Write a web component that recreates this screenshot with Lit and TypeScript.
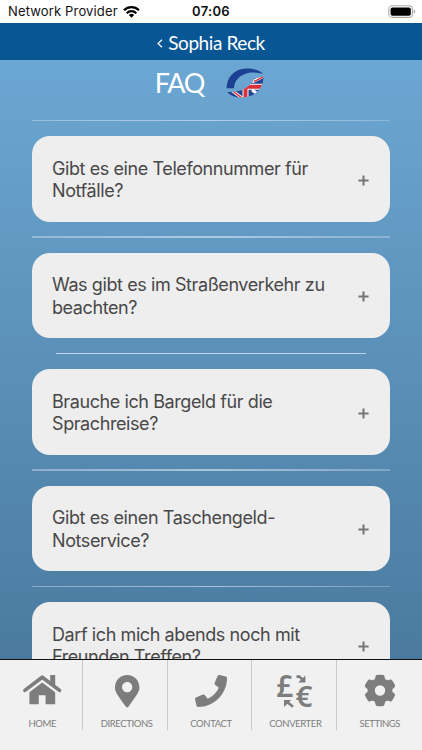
import { LitElement, html, css, svg } from "lit";
import { customElement, property } from "lit/decorators.js";

const marker = "M172.268 501.67C26.97 291.031 0 269.413 0 192 0 85.961 85.961 0 192 0s192 85.961 192 192c0 77.413-26.97 99.031-172.268 309.67-9.535 13.774-29.93 13.773-39.464 0zM192 272c44.183 0 80-35.817 80-80s-35.817-80-80-80-80 35.817-80 80 35.817 80 80 80z";
const phone = "M493.4 24.6l-104-24c-11.3-2.6-22.9 3.3-27.5 13.9l-48 112c-4.2 9.8-1.4 21.3 6.9 28l60.6 49.6c-36 76.7-98.9 140.5-177.2 177.2l-49.6-60.6c-6.8-8.3-18.2-11.1-28-6.9l-112 48C3.9 366.5-2 378.1.6 389.4l24 104C27.1 504.2 36.7 512 48 512c256.1 0 464-207.5 464-464 0-11.2-7.7-20.9-18.6-23.4z";
const teeth = [0, 60, 120, 180, 240, 300];

// Every tab icon is drawn in a 40 x 34 box.
const icons: Record<string, unknown> = {
  home: svg`<path d="M2.9 16.4 20.2 3.2 37.5 16.4" fill="none" stroke="currentColor" stroke-width="3.7" stroke-linecap="round" stroke-linejoin="round"/>
    <path d="M28.2 1h5v11l-5-4zM20.2 8.4 33.2 18.2v12.1H23.6v-9h-6.8v9H7.4V18.2z"/>`,
  directions: svg`<path transform="translate(8 1) scale(.0635)" d=${marker}/>`,
  contact: svg`<path transform="translate(4 1) scale(.0625)" d=${phone}/>`,
  converter: svg`<text class="cur" x="1.2" y="22.6" font-size="30" textLength="17" lengthAdjust="spacingAndGlyphs">£</text>
    <text class="cur" x="20.5" y="33" font-size="29" textLength="17" lengthAdjust="spacingAndGlyphs">€</text>
    <path d="M30.4 1.6v7h-7.2zM9 33v-7h7.200z"/>
    <path d="M21.500 2.600h2.700l4 3.300M18 32.800l-5.500-4.600" fill="none" stroke="currentColor" stroke-width="2.600"/>`,
  settings: svg`<circle cx="20" cy="16.5" r="8.8" fill="none" stroke="currentColor" stroke-width="7.2"/>
    ${teeth.map((a) => svg`<path transform="translate(20 16.5) rotate(${a})" d="M-5.3-10.5-4.3-14.6q.2-.7.9-.8 3.4-.6 6.8 0 .7.1.9.8L5.3-10.5z"/>`)}`,
};

@customElement("status-bar")
export class StatusBar extends LitElement {
  static styles = css`
    :host { display: grid; grid-template-columns: 1fr auto 1fr; align-items: center; height: 23px; background: #fff; color: #111; font: 13px/23px Inter, sans-serif; }
    .left { display: flex; align-items: center; gap: 5px; padding-left: 8px; letter-spacing: 0.15px; }
    .time { font-weight: 600; letter-spacing: 0.3px; }
    .right { display: flex; justify-content: flex-end; padding-right: 6px; }
    svg { display: block; }
  `;
  render() {
    return html`
      <div class="left"><span>Network Provider</span>
        <svg width="17" height="12" viewBox="0 0 17 12"><g fill="none" stroke="#000" stroke-width="2.2"><path d="M1 4.3a10.6 10.6 0 0 1 15 0M3.7 7.2a6.8 6.8 0 0 1 9.6 0"/></g><path d="M8.5 11.7 5.9 9.1a3.7 3.7 0 0 1 5.2 0z"/></svg>
      </div>
      <div class="time">07:06</div>
      <div class="right"><svg width="28" height="13" viewBox="0 0 28 13"><rect x=".8" y=".8" width="23.6" height="11.6" rx="3.4" fill="#fff" stroke="#aaa" stroke-width="1.1"/><rect x="2.6" y="2.4" width="20.2" height="8.4" rx="1.8"/><path d="M25.7 4.5q1.6.8 1.6 2.1t-1.6 2.1z" fill="#aaa"/></svg></div>`;
  }
}

@customElement("faq-card")
export class FaqCard extends LitElement {
  @property({ attribute: false }) lines: string[] = [];
  static styles = css`
    :host { display: flex; align-items: center; justify-content: space-between; box-sizing: border-box; height: 85.5px; padding: 0 21px 0 20px; border-radius: 18px; background: #eee; color: #484848; font: 18px/22.5px Inter, sans-serif; }
    .q { letter-spacing: -0.41px; white-space: nowrap; padding-top: 2.5px; }
    svg { display: block; margin-top: 3px; flex: none; }
  `;
  render() {
    return html`<div class="q">${this.lines.map((l) => html`<div>${l}</div>`)}</div>
      <svg width="11" height="11" viewBox="0 0 11 11"><path d="M5.5.4v10.2M.4 5.5h10.2" stroke="#777" stroke-width="2.1"/></svg>`;
  }
}

@customElement("tab-item")
export class TabItem extends LitElement {
  @property() icon = "";
  @property() label = "";
  static styles = css`
    :host { display: flex; flex-direction: column; align-items: center; height: 70px; padding: 14px 0 0; box-sizing: border-box; color: #7d7d7d; }
    svg { display: block; fill: currentColor; flex: none; overflow: visible; }
    .cur { font-family: "Noto Sans", sans-serif; font-weight: 600; }
    .label { margin-top: 9px; font: 9.5px/14px Lato, sans-serif; letter-spacing: -0.4px; }
  `;
  render() {
    return html`<svg width="40" height="34" viewBox="0 0 40 34">${icons[this.icon]}</svg><div class="label">${this.label}</div>`;
  }
}

@customElement("app-root")
export class AppRoot extends LitElement {
  static styles = css`
    :host { display: flex; flex-direction: column; height: 750px; overflow: hidden; background: #f1f1f1; }
    .nav { display: flex; justify-content: center; align-items: center; gap: 5px; height: 37px; flex: none; background: #095694; color: #fff; font: 19px/37px Lato, sans-serif; }
    .nav svg { margin-top: 3px; }
    .name { letter-spacing: -0.42px; padding-top: 1px; }
    .main { flex: 1; min-height: 0; overflow: hidden; box-sizing: border-box; padding: 0 32px; background: linear-gradient(#6ba7d3, #4b7a9e); }
    .head { display: flex; align-items: center; justify-content: center; height: 59.5px; box-sizing: border-box; padding: 0 3px 14px 0; gap: 22px; color: #fff; font: 27px/46px Lato, sans-serif; }
    .faq { letter-spacing: -1.2px; padding-top: 1px; }
    .rule { height: 1.5px; margin-bottom: 15px; background: linear-gradient(90deg, rgba(225,232,245,.4), rgba(225,232,245,.62) 50%, rgba(225,232,245,.3)); }
    .rule.short { margin-left: 24px; margin-right: 24px; background: rgba(225,232,245,.75); }
    faq-card { margin-bottom: 14.5px; }
    .tabs { flex: none; display: grid; grid-template-columns: repeat(5, 1fr); height: 91px; box-sizing: border-box; border-top: 1.5px solid #111; background: #f1f1f1; }
    .tabs tab-item + tab-item { border-left: 1px solid #c9c9c9; margin-left: -2px; padding-left: 1px; }
  `;
  private questions = [
    ["Gibt es eine Telefonnummer für", "Notfälle?"],
    ["Was gibt es im Straßenverkehr zu", "beachten?"],
    ["Brauche ich Bargeld für die", "Sprachreise?"],
    ["Gibt es einen Taschengeld-", "Notservice?"],
    ["Darf ich mich abends noch mit", "Freunden Treffen?"],
  ];
  private tabs = ["home", "directions", "contact", "converter", "settings"];
  render() {
    return html`
      <status-bar></status-bar>
      <div class="nav"><svg width="6" height="9" viewBox="0 0 6 9"><path d="M5 .8 1 4.5 5 8.2" fill="none" stroke="#fff" stroke-width="1.2"/></svg><span class="name">Sophia Reck</span></div>
      <div class="main">
        <div class="head"><span class="faq">FAQ</span>
          <svg width="38" height="30" viewBox="0 0 38 30">
            <defs><clipPath id="c"><path d="M1 24C8 24 13 23.500 17 21.500 22 19 26 15.500 28.500 10.500L37.500 8.500C37.300 16 34.500 22.500 27 26.800 18 31 7 30.500 1 24z"/></clipPath></defs>
            <path d="M.5 20.3C.7 10 7.5 1 20.5.6 28 .4 33.5 2.500 37 5.800 33 4.700 27 3.800 22 4.900 13.500 6.800 8 13 8 20.300z" fill="#1c4193"/>
            <g clip-path="url(#c)" fill="none">
              <path fill="#234393" d="M0 8h38v23H0z"/>
              <path d="M4 21 16 30M26 14 38 8M26 22l10 7" stroke="#fff" stroke-width="3"/>
              <path d="M19.500 14v16M15 18.700h23" stroke="#fff" stroke-width="6"/>
              <path d="M19.500 14v16M15 18.700h23" stroke="#dc3038" stroke-width="4"/>
              <path d="M4 21l12 9M28 13.500l10-5" stroke="#dc3038" stroke-width="1.500"/>
            </g>
          </svg>
        </div>
        ${this.questions.map((q, i) => html`<div class="rule ${i === 2 ? "short" : ""}"></div><faq-card .lines=${q}></faq-card>`)}
      </div>
      <div class="tabs">${this.tabs.map((t) => html`<tab-item icon=${t} label=${t.toUpperCase()}></tab-item>`)}</div>`;
  }
}
